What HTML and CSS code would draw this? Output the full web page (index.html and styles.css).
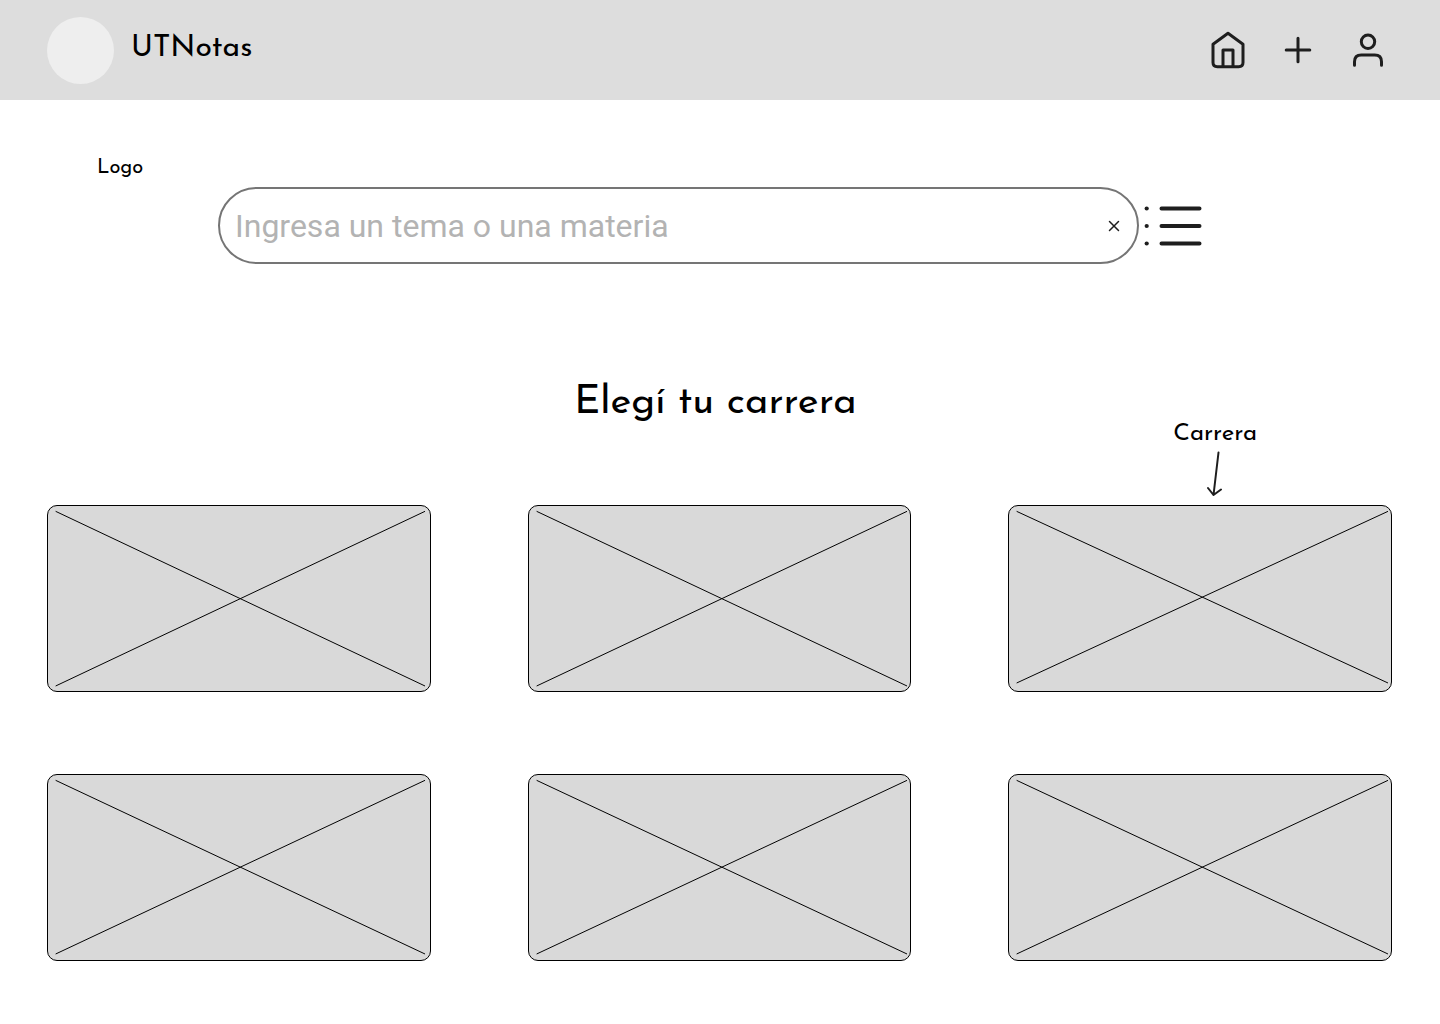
FILE: index.html
```html
<!DOCTYPE html>
<html lang="es">
<head>
<meta charset="utf-8">
<meta name="viewport" content="width=device-width, initial-scale=1">
<title>UTNotas</title>
<link rel="stylesheet" href="styles.css">
</head>
<body>
<header class="topbar">
  <a class="brand" href="#"><span class="avatar"></span><span class="brand-name">UTNotas</span></a>
  <nav class="nav" aria-label="Principal">
    <a class="nav-link" href="#" aria-label="Inicio">
      <svg class="icon" viewBox="0 0 40 40"><path d="M20 3.300 5 14.200V32.500Q5 36.700 9.300 36.700H30.700Q35 36.700 35 32.500V14.200ZM15 36.700V20H25V36.700"/></svg>
    </a>
    <a class="nav-link" href="#" aria-label="Agregar">
      <svg class="icon" viewBox="0 0 40 40"><path d="M20 8.200V31.800M8.200 20H31.800"/></svg>
    </a>
    <a class="nav-link" href="#" aria-label="Perfil">
      <svg class="icon" viewBox="0 0 40 40"><circle cx="20" cy="11.700" r="6.700"/><path d="M6.500 35.200V31.800Q6.500 25 13.300 25H26.700Q33.500 25 33.500 31.800V35.200"/></svg>
    </a>
  </nav>
</header>
<main class="page">
  <p class="logo-note">Logo</p>
  <form class="search" role="search">
    <div class="search-box">
      <input class="search-input" type="text" aria-label="Buscar" placeholder="Ingresa un tema o una materia">
      <button class="clear" type="reset" aria-label="Borrar">
        <svg class="clear-icon" viewBox="0 0 12 12"><path d="M1.500 1.500 10.500 10.500M10.500 1.500 1.500 10.500"/></svg>
      </button>
    </div>
    <button class="menu" type="button" aria-label="Filtros">
      <svg class="menu-icon" viewBox="0 0 60 44"><path d="M17.500 4.500H55.500M17.500 22H55.500M17.500 39.500H55.500"/><g class="dots"><circle cx="2.700" cy="4.500" r="2.100"/><circle cx="2.700" cy="22" r="2.100"/><circle cx="2.700" cy="39.500" r="2.100"/></g></svg>
    </button>
  </form>
  <div class="intro">
    <h1 class="title">Elegí tu carrera</h1>
    <div class="note">
      <span>Carrera</span>
      <svg class="arrow" viewBox="0 0 16 46"><path d="M11.500 1.500 6.500 44M1 37 6.500 44 14 38.500"/></svg>
    </div>
  </div>
  <div class="cards">
    <a class="card" href="#" aria-label="Carrera 1"><svg class="cross" viewBox="0 0 382 185" preserveAspectRatio="none"><path d="M8 5.500 377 180M377 5.500 8 180"/></svg></a>
    <a class="card" href="#" aria-label="Carrera 2"><svg class="cross" viewBox="0 0 382 185" preserveAspectRatio="none"><path d="M8 5.500 378 180M378 5.500 8 180"/></svg></a>
    <a class="card" href="#" aria-label="Carrera 3"><svg class="cross" viewBox="0 0 382 185" preserveAspectRatio="none"><path d="M8 5.500 379 177M379 5.500 8 177"/></svg></a>
    <a class="card" href="#" aria-label="Carrera 4"><svg class="cross" viewBox="0 0 382 185" preserveAspectRatio="none"><path d="M8 5.500 377 179M377 5.500 8 179"/></svg></a>
    <a class="card" href="#" aria-label="Carrera 5"><svg class="cross" viewBox="0 0 382 185" preserveAspectRatio="none"><path d="M8 5.500 378 179M378 5.500 8 179"/></svg></a>
    <a class="card" href="#" aria-label="Carrera 6"><svg class="cross" viewBox="0 0 382 185" preserveAspectRatio="none"><path d="M8 5.500 379 179M379 5.500 8 179"/></svg></a>
  </div>
</main>
</body>
</html>
```
FILE: styles.css
```css
* { box-sizing: border-box; }
body { margin: 0; background: #fff; color: #000; font-family: "Josefin Sans", Lato, sans-serif; }
svg { display: block; fill: none; stroke: #1e1e1e; stroke-linecap: round; stroke-linejoin: round; }
button { border: 0; padding: 0; background: none; cursor: pointer; }

.topbar { display: flex; justify-content: space-between; align-items: center; min-height: 100px; padding: 0 52px 0 47px; background: #ddd; }
.brand { display: flex; gap: 17px; color: inherit; text-decoration: none; }
.avatar { width: 67px; height: 67px; border-radius: 50%; background: #eee; }
.brand-name { font-size: 30px; line-height: 64px; }
.nav { display: flex; gap: 30px; }
.icon { width: 40px; height: 40px; stroke-width: 3; }

.page { padding: 56px 48px 60px 47px; }
.logo-note { margin: 0 0 7px 50px; font-size: 20px; line-height: 24px; }
.search { display: flex; align-items: center; gap: 5px; margin: 0 188px 0 171px; }
.search-box { display: flex; flex: 1; align-items: center; min-width: 0; height: 77px; padding: 0 17px 0 15px; border: 2px solid #757575; border-radius: 39px; }
.search-input { flex: 1; min-width: 0; border: 0; padding: 0; outline: 0; background: none; font: 32px/40px Roboto, sans-serif; color: #1e1e1e; }
.search-input::placeholder { color: #b3b3b3; opacity: 1; }
.clear-icon { width: 12px; height: 12px; stroke-width: 1.5; }
.menu-icon { width: 60px; height: 44px; stroke-width: 4; }
.dots { fill: #1e1e1e; stroke: none; }

.intro, .cards { display: grid; grid-template-columns: repeat(3, minmax(0, 1fr)); column-gap: 97px; }
.intro { align-items: end; margin: 113px 0 8px; }
.title { grid-column: 2; margin: 0 8px 68px 0; font-size: 40px; font-weight: 400; line-height: 52px; text-align: center; white-space: nowrap; }
.note { display: flex; flex-direction: column; align-items: center; gap: 2px; padding-left: 30px; font-size: 24px; line-height: 30px; }
.arrow { width: 16px; height: 46px; stroke-width: 2; }
.cards { row-gap: 82px; }
.card { aspect-ratio: 384 / 187; border: 1px solid #000; border-radius: 10px; background: #d9d9d9; overflow: hidden; }
.cross { width: 100%; height: 100%; stroke: #000; stroke-width: 1; }
```
